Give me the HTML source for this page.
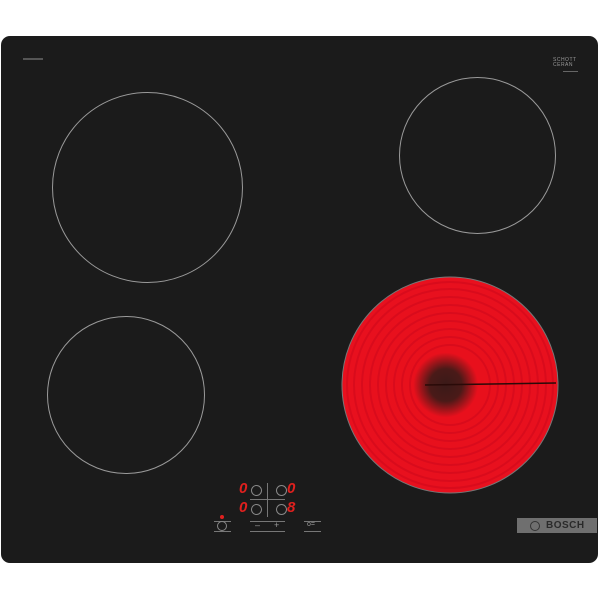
<!DOCTYPE html><html><head><style>
body{margin:0;width:600px;height:600px;background:#fff;position:relative;overflow:hidden;font-family:"Liberation Sans",sans-serif}
.hob{position:absolute;left:1px;top:36px;width:597px;height:527px;background:#1b1b1b;border-radius:9px}
.c{position:absolute;border:1px solid #9a9a9a;border-radius:50%;box-sizing:border-box}
.d{position:absolute;color:#e0201e;font:italic bold 15px "Liberation Sans",sans-serif;line-height:15px}
.k{position:absolute;width:11px;height:11px;border:1px solid #888;border-radius:50%;box-sizing:border-box}
.l{position:absolute;height:1px;background:#777}
.b{position:absolute;left:517px;top:518px;width:80px;height:15px;background:#6f6f6f;color:#2a2a2a;font:bold 10px "Liberation Sans",sans-serif;line-height:15px;letter-spacing:.5px}
</style></head><body>
<div class="hob"></div>
<div style="position:absolute;left:23px;top:58px;width:20px;height:2px;background:#555"></div>
<div style="position:absolute;left:553px;top:58px;font-size:5px;color:#999;line-height:5px;letter-spacing:.5px">SCHOTT<br>CERAN</div>
<div style="position:absolute;left:563px;top:71px;width:15px;height:1px;background:#666"></div>
<div class="c" style="left:52px;top:92px;width:191px;height:191px"></div>
<div class="c" style="left:399px;top:77px;width:157px;height:157px"></div>
<div class="c" style="left:47px;top:316px;width:158px;height:158px"></div>
<svg style="position:absolute;left:340px;top:275px" width="220" height="220" viewBox="0 0 220 220">
<defs><radialGradient id="g" cx=".48" cy=".5"><stop offset="0" stop-color="#3a1a18"/><stop offset=".15" stop-color="#4a1a18"/><stop offset=".3" stop-color="#e8101c"/><stop offset="1" stop-color="#e8101e"/></radialGradient></defs>
<circle cx="110" cy="110" r="108" fill="url(#g)" stroke="#777" stroke-width="1"/>
<g fill="none" stroke="#b8001a" stroke-width="2" opacity=".3">
<circle cx="110" cy="110" r="40"/><circle cx="110" cy="110" r="48"/><circle cx="110" cy="110" r="56"/><circle cx="110" cy="110" r="64"/><circle cx="110" cy="110" r="72"/><circle cx="110" cy="110" r="80"/><circle cx="110" cy="110" r="88"/><circle cx="110" cy="110" r="96"/><circle cx="110" cy="110" r="103"/></g>
<line x1="85" y1="110" x2="216" y2="108" stroke="#2a0a08" stroke-width="1.5"/>
</svg>
<div class="d" style="left:239px;top:481px">0</div><div class="k" style="left:251px;top:485px"></div>
<div class="k" style="left:276px;top:485px"></div><div class="d" style="left:287px;top:481px">0</div>
<div class="d" style="left:239px;top:500px">0</div><div class="k" style="left:251px;top:504px"></div>
<div class="k" style="left:276px;top:504px"></div><div class="d" style="left:287px;top:500px">8</div>
<div style="position:absolute;left:267px;top:483px;width:1px;height:34px;background:#777"></div>
<div class="l" style="left:250px;top:499px;width:35px"></div>
<div style="position:absolute;left:220px;top:515px;width:4px;height:4px;border-radius:50%;background:#e0201e"></div>
<div class="l" style="left:214px;top:521px;width:17px"></div><div class="l" style="left:214px;top:531px;width:17px"></div>
<div class="k" style="left:217px;top:521px;width:10px;height:10px"></div>
<div class="l" style="left:250px;top:521px;width:35px"></div><div class="l" style="left:250px;top:531px;width:35px"></div>
<div style="position:absolute;left:255px;top:520px;font-size:9px;color:#999">–</div>
<div style="position:absolute;left:274px;top:520px;font-size:9px;color:#999">+</div>
<div class="l" style="left:304px;top:521px;width:17px"></div><div class="l" style="left:304px;top:531px;width:17px"></div>
<div style="position:absolute;left:307px;top:521px;font-size:7px;color:#999">o=</div>
<div class="b"><span style="position:absolute;left:13px;top:3px;width:8px;height:8px;border:1px solid #333;border-radius:50%"></span><span style="position:absolute;left:29px">BOSCH</span></div>
</body></html>
